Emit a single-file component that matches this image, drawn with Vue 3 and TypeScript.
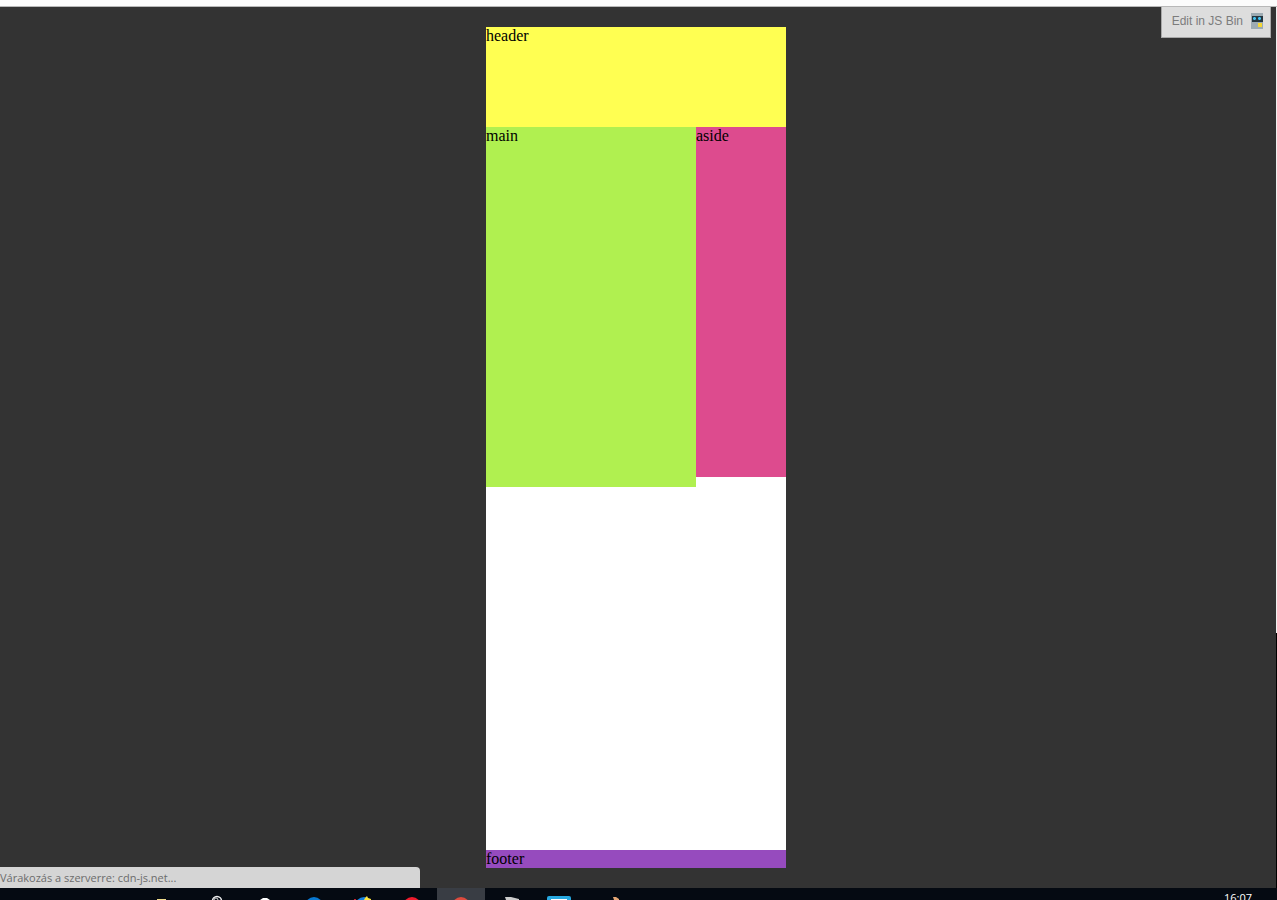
<script setup lang="ts">
const address = 'cdn-js.net'
</script>

<template>
  <div class="screen">
    <div class="toolbar"></div>
    <div class="viewport">
      <div class="page">
        <header class="header">header</header>
        <div class="columns">
          <main class="main">main</main>
          <aside class="aside">aside</aside>
        </div>
        <footer class="footer">footer</footer>
      </div>
      <a class="edit" href="#">
        <span>Edit in JS Bin</span>
        <svg width="12" height="16" viewBox="0 0 12 16" aria-hidden="true" shape-rendering="crispEdges">
          <path fill="#9dabb3" d="M0 0h12v16H0z" />
          <path fill="#243640" d="M1 3h11v6H1z" />
          <path fill="#2f86a8" d="M2 4h3v3H2zM7 4h3v3H7z" />
          <path fill="#48c4f0" d="M3 4h1v1h1v1H4v1H3V6H2V5h1zM8 4h1v1h1v1H9v1H8V6H7V5h1z" />
          <path fill="#f5d735" d="M7 10h4v4H7z" />
        </svg>
      </a>
      <div class="status">Várakozás a szerverre: {{ address }}...</div>
      <div class="rail"></div>
    </div>
    <div class="taskbar">
      <div class="active"></div>
      <svg class="icons" width="640" height="12" viewBox="0 0 640 12" aria-hidden="true">
        <path fill="#f0dc8c" d="M157 12v-1h9v1z" />
        <circle cx="217" cy="13" r="4.500" fill="none" stroke="#eee" stroke-width="1.500" />
        <circle cx="216" cy="12" r="2" fill="none" stroke="#ddd" />
        <path fill="#fff" d="M260 12l3-2h4l3 2z" />
        <circle cx="314" cy="18" r="9" fill="#0878d2" />
        <circle cx="364" cy="18" r="9" fill="#1680df" />
        <path fill="#c62232" d="M354 11h2v1h-2z" />
        <path fill="#ffe33d" d="M364 12l1-2 2-2 1 2 3 1v1z" />
        <circle cx="412" cy="18" r="9" fill="#f01b2d" />
        <circle cx="461" cy="18" r="9" fill="#dd4b3e" />
        <path fill="#ccc" d="M505 9h6l8 2v1h-13z" />
        <rect x="547" y="8" width="24" height="8" rx="2" fill="#27a8e0" />
        <path fill="#fff" d="M551 11h16v1h-16z" />
        <path fill="#e5a775" d="M613 9h3l3 2v1h-5z" />
      </svg>
      <time class="clock">16:07</time>
    </div>
  </div>
</template>

<style>
body {
  margin: 0;
  background: #333;
}
</style>

<style scoped>
.screen {
  display: flex;
  flex-direction: column;
  height: 100vh;
  overflow: hidden;
  background: #333;
  color: #000;
  font: 16px/18px "Liberation Serif", serif;
}
.toolbar {
  flex: 0 0 6px;
  background: #fcfcfc;
  border-bottom: 1px solid #b8b8b8;
}
.viewport {
  position: relative;
  display: flex;
  flex: 1;
  justify-content: center;
  min-height: 0;
  padding: 20px 5px 20px 0;
}
.page {
  display: flex;
  flex-direction: column;
  width: 300px;
  background: #fff;
}
.header {
  height: 100px;
  background: #ffff52;
}
.columns {
  display: flex;
  flex: 1;
  align-items: flex-start;
}
.main {
  flex: 7;
  height: 360px;
  background: #b0f050;
}
.aside {
  flex: 3;
  height: 350px;
  background: #dd4b8e;
}
.footer {
  background: #964bbe;
}
.edit {
  position: absolute;
  top: 0;
  right: 6px;
  display: flex;
  align-items: center;
  gap: 8px;
  box-sizing: border-box;
  height: 31px;
  padding: 0 7px 2px 10px;
  border: 1px solid #a8a8a8;
  border-top: 0;
  background: #ddd;
  color: #7c7c7c;
  font: 12px/18px "Liberation Sans", sans-serif;
  text-decoration: none;
}
.status {
  position: absolute;
  bottom: 0;
  left: 0;
  box-sizing: border-box;
  width: 420px;
  height: 21px;
  border-radius: 0 4px 0 0;
  background: #d5d5d5;
  color: #6c6c6c;
  font: 11px/22px "Open Sans", sans-serif;
}
.rail {
  position: absolute;
  top: 0;
  right: 0;
  bottom: 0;
  width: 1px;
  background: linear-gradient(#f0f0f0 71%, #000 71%);
}
.taskbar {
  position: relative;
  flex: 0 0 12px;
  overflow: hidden;
  background: #050a12;
}
.active {
  position: absolute;
  left: 437px;
  width: 48px;
  height: 12px;
  background: #393d44;
}
.icons {
  position: absolute;
  top: 0;
  left: 0;
}
.clock {
  position: absolute;
  top: 2px;
  right: 25px;
  color: #fff;
  font: 11px/16px "Open Sans", sans-serif;
}
</style>
